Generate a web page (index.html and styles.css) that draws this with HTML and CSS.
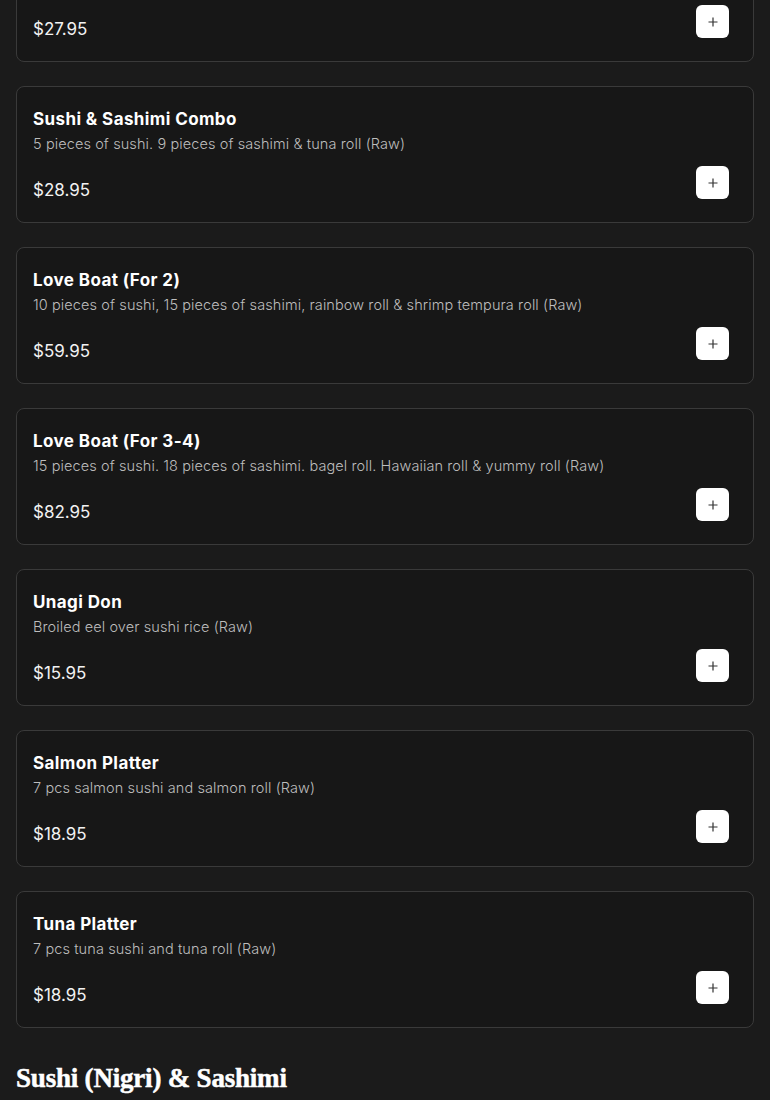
FILE: index.html
```html
<!DOCTYPE html>
<html lang="en">
<head>
  <meta charset="UTF-8" />
  <meta name="viewport" content="width=device-width, initial-scale=1.0" />
  <title>Menu – Combos</title>
  <link rel="stylesheet" href="styles.css">
</head>
<body>
  <main class="menu">
    <!-- Combo platters -->
    <section class="items">
      <article class="card">
        <div class="info">
          <h3 class="name">Chirashi Don</h3>
          <p class="desc">Assorted sashimi over sushi rice (Raw)</p>
          <p class="price">$27.95</p>
        </div>
        <button class="add" aria-label="Add to order">
          <svg viewBox="0 0 10 10" width="10" height="10"><path d="M5 0.5v9M0.5 5h9"/></svg>
        </button>
      </article>

      <article class="card">
        <div class="info">
          <h3 class="name">Sushi &amp; Sashimi Combo</h3>
          <p class="desc">5 pieces of sushi. 9 pieces of sashimi &amp; tuna roll (Raw)</p>
          <p class="price">$28.95</p>
        </div>
        <button class="add" aria-label="Add to order">
          <svg viewBox="0 0 10 10" width="10" height="10"><path d="M5 0.5v9M0.5 5h9"/></svg>
        </button>
      </article>

      <article class="card">
        <div class="info">
          <h3 class="name">Love Boat (For 2)</h3>
          <p class="desc">10 pieces of sushi, 15 pieces of sashimi, rainbow roll &amp; shrimp tempura roll (Raw)</p>
          <p class="price">$59.95</p>
        </div>
        <button class="add" aria-label="Add to order">
          <svg viewBox="0 0 10 10" width="10" height="10"><path d="M5 0.5v9M0.5 5h9"/></svg>
        </button>
      </article>

      <article class="card">
        <div class="info">
          <h3 class="name">Love Boat (For 3-4)</h3>
          <p class="desc">15 pieces of sushi. 18 pieces of sashimi. bagel roll. Hawaiian roll &amp; yummy roll (Raw)</p>
          <p class="price">$82.95</p>
        </div>
        <button class="add" aria-label="Add to order">
          <svg viewBox="0 0 10 10" width="10" height="10"><path d="M5 0.5v9M0.5 5h9"/></svg>
        </button>
      </article>

      <article class="card">
        <div class="info">
          <h3 class="name">Unagi Don</h3>
          <p class="desc">Broiled eel over sushi rice (Raw)</p>
          <p class="price">$15.95</p>
        </div>
        <button class="add" aria-label="Add to order">
          <svg viewBox="0 0 10 10" width="10" height="10"><path d="M5 0.5v9M0.5 5h9"/></svg>
        </button>
      </article>

      <article class="card">
        <div class="info">
          <h3 class="name">Salmon Platter</h3>
          <p class="desc">7 pcs salmon sushi and salmon roll (Raw)</p>
          <p class="price">$18.95</p>
        </div>
        <button class="add" aria-label="Add to order">
          <svg viewBox="0 0 10 10" width="10" height="10"><path d="M5 0.5v9M0.5 5h9"/></svg>
        </button>
      </article>

      <article class="card">
        <div class="info">
          <h3 class="name">Tuna Platter</h3>
          <p class="desc">7 pcs tuna sushi and tuna roll (Raw)</p>
          <p class="price">$18.95</p>
        </div>
        <button class="add" aria-label="Add to order">
          <svg viewBox="0 0 10 10" width="10" height="10"><path d="M5 0.5v9M0.5 5h9"/></svg>
        </button>
      </article>
    </section>

    <h2 class="section-title">Sushi (Nigri) &amp; Sashimi</h2>
  </main>
</body>
</html>
```

FILE: styles.css
```css
/* ─── Dark menu ─────────────────────────── */
:root {
  --bg: #1b1b1b;
  --card: #171717;
  --line: #3a3a3a;
  --fg: #ffffff;
  --fg-dim: #bdbdbd;
}
*, *::before, *::after { box-sizing: border-box; }
html, body { margin: 0; }
body {
  background: var(--bg);
  color: var(--fg);
  font-family: Inter, "Noto Sans", sans-serif;
}

.menu {
  padding: 0 16px;
  margin-top: -75px; /* page is scrolled: first card cut off */
}

/* ── Item cards ─────────────────────────── */
.items {
  display: flex;
  flex-direction: column;
  gap: 24px;
}

.card {
  display: flex;
  justify-content: space-between;
  align-items: flex-end;
  padding: 20px 24px 20px 16px;
  border: 1px solid var(--line);
  border-radius: 8px;
  background: var(--card);
}

.name {
  margin: 0;
  font-size: 17px;
  line-height: 24px;
  font-weight: 700;
  letter-spacing: 0.4px;
}
.desc {
  margin: 3px 0 0;
  font-size: 14.5px;
  line-height: 20px;
  font-weight: 300;
  letter-spacing: 0.1px;
  color: var(--fg-dim);
}
.price {
  margin: 24px 0 0;
  font-size: 17px;
  line-height: 24px;
  font-weight: 400;
  color: #f2f2f2;
}

.add {
  display: flex;
  align-items: center;
  justify-content: center;
  width: 33px;
  height: 33px;
  margin-bottom: 3px;
  padding: 0;
  border: none;
  border-radius: 6px;
  background: #fff;
  cursor: pointer;
}
.add svg { stroke: #333; stroke-width: 1.2; fill: none; }

/* ── Section heading ────────────────────── */
.section-title {
  margin: 35px 0 20px;
  font-family: "Liberation Serif", serif;
  font-size: 27px;
  font-weight: 700;
  line-height: 1.15;
  letter-spacing: -0.2px;
  -webkit-text-stroke: 0.5px #fff;
}
```
